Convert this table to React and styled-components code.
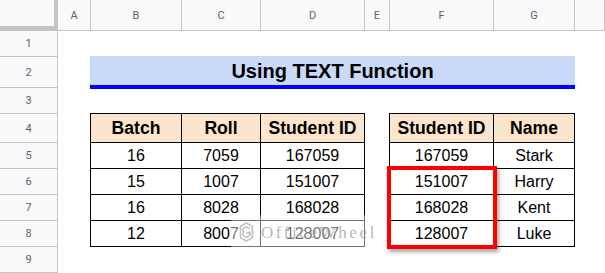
import React from 'react';
import styled, { createGlobalStyle } from 'styled-components';

const GlobalStyle = createGlobalStyle`
  html, body {
    margin: 0;
    padding: 0;
    background: #ffffff;
    overflow: hidden;
  }
`;

const GRID = '#c4c4c4';
const HEAD_BG = '#f8f9fa';

const Sheet = styled.div`
  position: relative;
  width: 605px;
  height: 273px;
  display: grid;
  grid-template-columns: 58px 33px 91px 79px 104px 25px 104px 81px 1fr;
  grid-template-rows: 31px 26px 31px 26px 29px 26px 26px 26px 26px 26px;
  background: #ffffff;
  overflow: hidden;
`;

const Corner = styled.div`
  grid-column: 1;
  grid-row: 1;
  background: ${HEAD_BG};
  border-right: 4px solid ${GRID};
  border-bottom: 5px solid ${GRID};
  box-sizing: border-box;
  margin-right: 0;
`;

const ColHead = styled.div`
  grid-row: 1;
  background: ${HEAD_BG};
  border-right: 1px solid ${GRID};
  border-bottom: 1px solid ${GRID};
  display: flex;
  align-items: center;
  justify-content: center;
  font-family: Roboto, 'Liberation Sans', sans-serif;
  font-size: 11px;
  color: #5f6368;
`;

const RowHead = styled.div`
  grid-column: 1;
  background: ${HEAD_BG};
  border-right: 1px solid ${GRID};
  border-bottom: 1px solid ${GRID};
  display: flex;
  align-items: center;
  justify-content: center;
  font-family: Roboto, 'Liberation Sans', sans-serif;
  font-size: 11px;
  color: #5f6368;
`;

const Title = styled.div`
  grid-column: 3 / 9;
  grid-row: 3;
  align-self: start;
  height: 33px;
  margin: -1px 0 0 -1px;
  box-sizing: border-box;
  background: #c9daf8;
  border-bottom: 4px solid #0000ff;
  display: flex;
  align-items: center;
  justify-content: center;
  font-family: 'Liberation Sans', Arial, sans-serif;
  font-weight: 700;
  font-size: 20px;
  color: #000000;
  padding-top: 1px;
`;

const Cell = styled.div`
  grid-column: ${(p) => p.$col};
  grid-row: ${(p) => p.$row};
  border-right: 1px solid #000000;
  border-bottom: 1px solid #000000;
  border-left: ${(p) => (p.$first ? '1px solid #000000' : 'none')};
  border-top: ${(p) => (p.$header ? '1px solid #000000' : 'none')};
  margin-left: ${(p) => (p.$first ? '-1px' : '0')};
  margin-top: ${(p) => (p.$header ? '-1px' : '0')};
  background: ${(p) => (p.$header ? '#fce5cd' : '#ffffff')};
  display: flex;
  align-items: center;
  justify-content: center;
  font-family: 'Liberation Sans', Arial, sans-serif;
  font-weight: ${(p) => (p.$header ? 700 : 400)};
  font-size: ${(p) => (p.$header ? '17.6px' : '16px')};
  color: #000000;
  padding-top: 1px;
`;

const Highlight = styled.div`
  grid-column: 7;
  grid-row: 7 / 10;
  margin: -3px -3px -2px -3px;
  border: 4px solid #ff0000;
  box-shadow: 2px 3px 4px rgba(0, 0, 0, 0.35);
  z-index: 2;
  pointer-events: none;
`;

const Watermark = styled.div`
  position: absolute;
  left: 231px;
  top: 215px;
  width: 146px;
  height: 34px;
  display: flex;
  align-items: center;
  gap: 7px;
  padding-left: 8px;
  box-sizing: border-box;
  background: rgba(255, 255, 255, 0.45);
  z-index: 1;
`;

const WatermarkText = styled.span`
  font-family: 'Liberation Serif', 'DejaVu Serif', serif;
  font-size: 17px;
  letter-spacing: 2.6px;
  color: rgba(150, 150, 150, 0.7);
  margin-top: 2px;
`;

const Logo = () => (
  <svg width="20" height="28" viewBox="0 0 20 28" fill="none">
    <g stroke="rgba(140,140,140,0.55)" strokeWidth="2.2" strokeLinejoin="round">
      <path d="M10 2 L18 6.5 L18 21.5 L10 26 L2 21.5 L2 6.5 Z" />
      <path d="M10 7 L14.5 9.5 M10 7 L5.5 9.5 L5.5 18.5 L10 21 L14.5 18.5 L14.5 14 L10 16" />
    </g>
  </svg>
);

const columns = ['A', 'B', 'C', 'D', 'E', 'F', 'G', ''];

const table1 = [
  ['Batch', 'Roll', 'Student ID'],
  ['16', '7059', '167059'],
  ['15', '1007', '151007'],
  ['16', '8028', '168028'],
  ['12', '8007', '128007'],
];

const table2 = [
  ['Student ID', 'Name'],
  ['167059', 'Stark'],
  ['151007', 'Harry'],
  ['168028', 'Kent'],
  ['128007', 'Luke'],
];

const App = () => (
  <>
    <GlobalStyle />
    <Sheet>
      <Corner />
      {columns.map((c, i) => (
        <ColHead key={i} style={{ gridColumn: i + 2 }}>
          {c}
        </ColHead>
      ))}
      {Array.from({ length: 9 }, (_, i) => (
        <RowHead key={i} style={{ gridRow: i + 2 }}>
          {i + 1}
        </RowHead>
      ))}
      <Title>Using TEXT Function</Title>
      {table1.map((row, r) =>
        row.map((v, c) => (
          <Cell key={`a${r}${c}`} $col={c + 3} $row={r + 5} $header={r === 0} $first={c === 0}>
            {v}
          </Cell>
        ))
      )}
      {table2.map((row, r) =>
        row.map((v, c) => (
          <Cell key={`b${r}${c}`} $col={c + 7} $row={r + 5} $header={r === 0} $first={c === 0}>
            {v}
          </Cell>
        ))
      )}
      <Highlight />
      <Watermark>
        <Logo />
        <WatermarkText>OfficeWheel</WatermarkText>
      </Watermark>
    </Sheet>
  </>
);

export default App;
